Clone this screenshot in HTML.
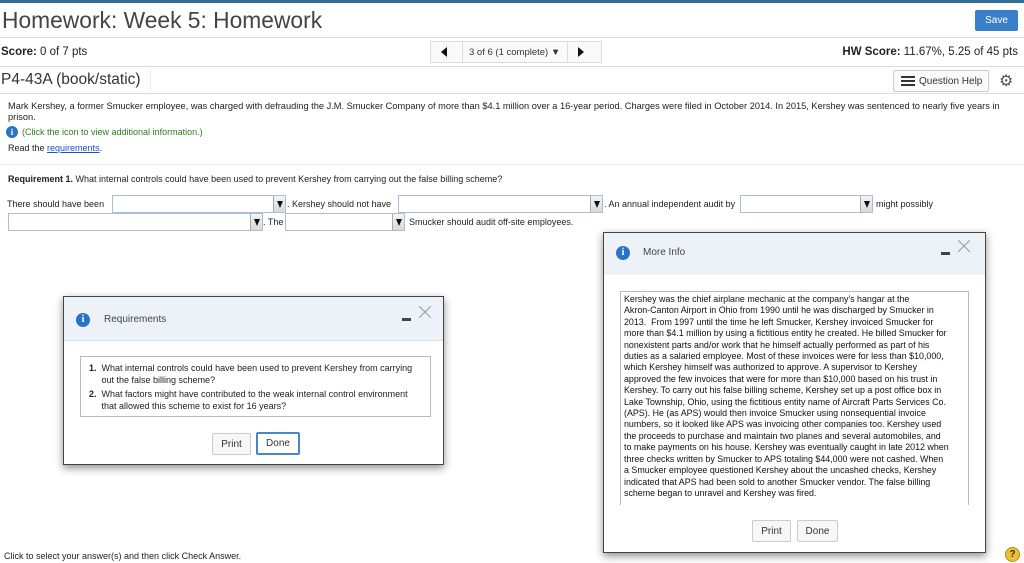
<!DOCTYPE html>
<html><head><meta charset="utf-8"><style>
*{margin:0;padding:0;box-sizing:border-box}
body{width:1024px;height:563px;position:relative;overflow:hidden;background:#fff;font-family:"Liberation Sans",Arial,sans-serif;color:#222}
.a{position:absolute;white-space:nowrap}
.hr{position:absolute;left:0;width:1024px;height:1px;background:#d8dde3}
.sel{position:absolute;height:18px;border:1px solid #a9bfd9;background:#fff}
.sel:after{content:"";position:absolute;right:0;top:0;width:11px;height:16px;background:linear-gradient(#f4f4f4,#d9d9d9);border-left:1px solid #aaa}
.sel i{position:absolute;right:2px;top:5px;width:0;height:0;border-left:3.5px solid transparent;border-right:3.5px solid transparent;border-top:7px solid #111;z-index:2}
.t9{font-size:9px}
.dlg{position:absolute;background:#fff;border:1px solid #444;box-shadow:0 3px 8px rgba(0,0,0,.45)}
.hd{position:absolute;left:0;top:0;right:0;background:#edf2f8;border-bottom:1px solid #d4e0ee}
.ic{position:absolute;width:14px;height:14px;border-radius:50%;background:#2b73c4;color:#fff;font:bold 10px/14px "Liberation Serif",serif;text-align:center}
.btn{position:absolute;height:22px;border:1px solid #ccc;border-radius:2px;background:#f7f7f7;font-size:10px;line-height:21px;text-align:center;color:#333}
</style></head><body>
<div class="a" style="left:0;top:0;width:1024px;height:3px;background:#2f6f96"></div>
<div class="a" style="left:2px;top:7px;font-size:22.8px;color:#444">Homework: Week 5: Homework</div>
<div class="a" style="left:975px;top:10px;width:43px;height:21px;background:#3a7fcb;color:#fff;font-size:10px;line-height:21px;text-align:center;border-radius:2px">Save</div>
<div class="hr" style="top:37px"></div>
<div class="a" style="left:1px;top:46px;font-size:11.5px"><b>Score:</b> 0 of 7 pts</div>
<div class="a" style="left:430px;top:41px;width:172px;height:22px;border:1px solid #ddd;background:#fafafa"></div>
<div class="a" style="left:462px;top:41px;width:1px;height:22px;background:#ddd"></div>
<div class="a" style="left:567px;top:41px;width:1px;height:22px;background:#ddd"></div>
<div class="a" style="left:441px;top:47px;width:0;height:0;border-top:5px solid transparent;border-bottom:5px solid transparent;border-right:6px solid #111"></div>
<div class="a" style="left:578px;top:47px;width:0;height:0;border-top:5px solid transparent;border-bottom:5px solid transparent;border-left:6px solid #111"></div>
<div class="a" style="left:469px;top:47px;font-size:9.5px;color:#333">3 of 6 (1 complete) ▼</div>
<div class="a" style="right:6px;top:46px;font-size:11.5px"><b>HW Score:</b> 11.67%, 5.25 of 45 pts</div>
<div class="hr" style="top:66px"></div>
<div class="a" style="left:1px;top:71px;font-size:15.5px;color:#333">P4-43A (book/static)</div>
<div class="a" style="top:67px;width:1px;height:26px;background:#eee;left:150px"></div>
<div class="a" style="left:893px;top:70px;width:96px;height:22px;border:1px solid #ccc;border-radius:2px;background:#fafafa;font-size:10px;line-height:21px;padding-left:25px;color:#333">Question Help</div>
<div class="a" style="left:901px;top:76px;width:14px;height:10px;background:repeating-linear-gradient(#333 0 2px,transparent 2px 4px)"></div>
<div class="a" style="left:999px;top:71px;font-size:16px;color:#555">⚙</div>
<div class="hr" style="top:93px"></div>
<div class="a" style="left:8px;top:101px;line-height:11px;font-size:9.25px">Mark Kershey, a former Smucker employee, was charged with defrauding the J.M. Smucker Company of more than $4.1 million over a 16-year period. Charges were filed in October 2014. In 2015, Kershey was sentenced to nearly five years in<br>prison.</div>
<div class="ic" style="left:6px;top:126px;width:12px;height:12px;line-height:12px;font-size:9px">i</div>
<div class="a t9" style="left:22px;top:127px;color:#2c7d1c">(Click the icon to view additional information.)</div>
<div class="a t9" style="left:8px;top:143px">Read the <span style="color:#1a4fd0;text-decoration:underline">requirements</span>.</div>
<div class="hr" style="top:164px;background:#eee"></div>
<div class="a t9" style="left:8px;top:174px"><b>Requirement 1.</b> What internal controls could have been used to prevent Kershey from carrying out the false billing scheme?</div>
<div class="a t9" style="left:7px;top:199px">There should have been</div>
<div class="sel" style="left:112px;top:195px;width:174px"><i></i></div>
<div class="a t9" style="left:287px;top:199px">. Kershey should not have</div>
<div class="sel" style="left:398px;top:195px;width:205px"><i></i></div>
<div class="a t9" style="left:604px;top:199px">. An annual independent audit by</div>
<div class="sel" style="left:740px;top:195px;width:133px"><i></i></div>
<div class="a t9" style="left:876px;top:199px">might possibly</div>
<div class="sel" style="left:8px;top:213px;width:255px"><i></i></div>
<div class="a t9" style="left:263px;top:217px">. The</div>
<div class="sel" style="left:285px;top:213px;width:120px"><i></i></div>
<div class="a t9" style="left:409px;top:217px">Smucker should audit off-site employees.</div>
<div class="a t9" style="left:4px;top:551px">Click to select your answer(s) and then click Check Answer.</div>
<div class="a" style="left:1005px;top:547px;width:15px;height:15px;border-radius:50%;background:#f0c030;border:1px solid #b08a10;font:bold 10px/13px 'Liberation Sans';text-align:center;color:#333">?</div>

<div class="dlg" style="left:63px;top:296px;width:381px;height:169px">
<div class="hd" style="height:44px"></div>
<div class="ic" style="left:12px;top:16px">i</div>
<div class="a" style="left:40px;top:17px;font-size:10px;color:#444">Requirements</div>
<div class="a" style="left:338px;top:21px;width:9px;height:3px;background:#444"></div>
<svg class="a" style="left:355px;top:9px" width="12" height="12"><path d="M0 0L12 12M12 0L0 12" stroke="#999" stroke-width="1"/></svg>
<div class="a" style="left:16px;top:59px;width:351px;height:61px;border:1px solid #bbb;font-size:9px;line-height:12px;padding:5px 0 0 8px;white-space:normal">
<div><b>1.</b>&nbsp; What internal controls could have been used to prevent Kershey from carrying<br>&nbsp;&nbsp;&nbsp;&nbsp; out the false billing scheme?</div>
<div style="margin-top:2px"><b>2.</b>&nbsp; What factors might have contributed to the weak internal control environment<br>&nbsp;&nbsp;&nbsp;&nbsp; that allowed this scheme to exist for 16 years?</div></div>
<div class="btn" style="left:148px;top:136px;width:39px">Print</div>
<div class="btn" style="left:192px;top:135px;width:44px;height:23px;border:2px solid #4a86c8;background:#fff;line-height:19px">Done</div>
</div>

<div class="dlg" style="left:603px;top:232px;width:383px;height:321px">
<div class="hd" style="height:42px;border:none"></div>
<div class="ic" style="left:12px;top:13px">i</div>
<div class="a" style="left:39px;top:14px;font-size:10px;color:#444">More Info</div>
<div class="a" style="left:337px;top:19px;width:9px;height:3px;background:#444"></div>
<svg class="a" style="left:354px;top:7px" width="12" height="12"><path d="M0 0L12 12M12 0L0 12" stroke="#999" stroke-width="1"/></svg>
<div class="a" style="left:16px;top:58px;width:349px;height:214px;border:1px solid #bbb;border-bottom:none;font-size:8.9px;line-height:11.4px;padding:2px 0 0 3px;color:#111;overflow:hidden">Kershey was the chief airplane mechanic at the company's hangar at the<br>Akron-Canton Airport in Ohio from 1990 until he was discharged by Smucker in<br>2013.&nbsp; From 1997 until the time he left Smucker, Kershey invoiced Smucker for<br>more than $4.1 million by using a fictitious entity he created. He billed Smucker for<br>nonexistent parts and/or work that he himself actually performed as part of his<br>duties as a salaried employee. Most of these invoices were for less than $10,000,<br>which Kershey himself was authorized to approve. A supervisor to Kershey<br>approved the few invoices that were for more than $10,000 based on his trust in<br>Kershey. To carry out his false billing scheme, Kershey set up a post office box in<br>Lake Township, Ohio, using the fictitious entity name of Aircraft Parts Services Co.<br>(APS). He (as APS) would then invoice Smucker using nonsequential invoice<br>numbers, so it looked like APS was invoicing other companies too. Kershey used<br>the proceeds to purchase and maintain two planes and several automobiles, and<br>to make payments on his house. Kershey was eventually caught in late 2012 when<br>three checks written by Smucker to APS totaling $44,000 were not cashed. When<br>a Smucker employee questioned Kershey about the uncashed checks, Kershey<br>indicated that APS had been sold to another Smucker vendor. The false billing<br>scheme began to unravel and Kershey was fired.</div>
<div class="btn" style="left:148px;top:287px;width:39px">Print</div>
<div class="btn" style="left:193px;top:287px;width:41px">Done</div>
</div>
</body></html>
